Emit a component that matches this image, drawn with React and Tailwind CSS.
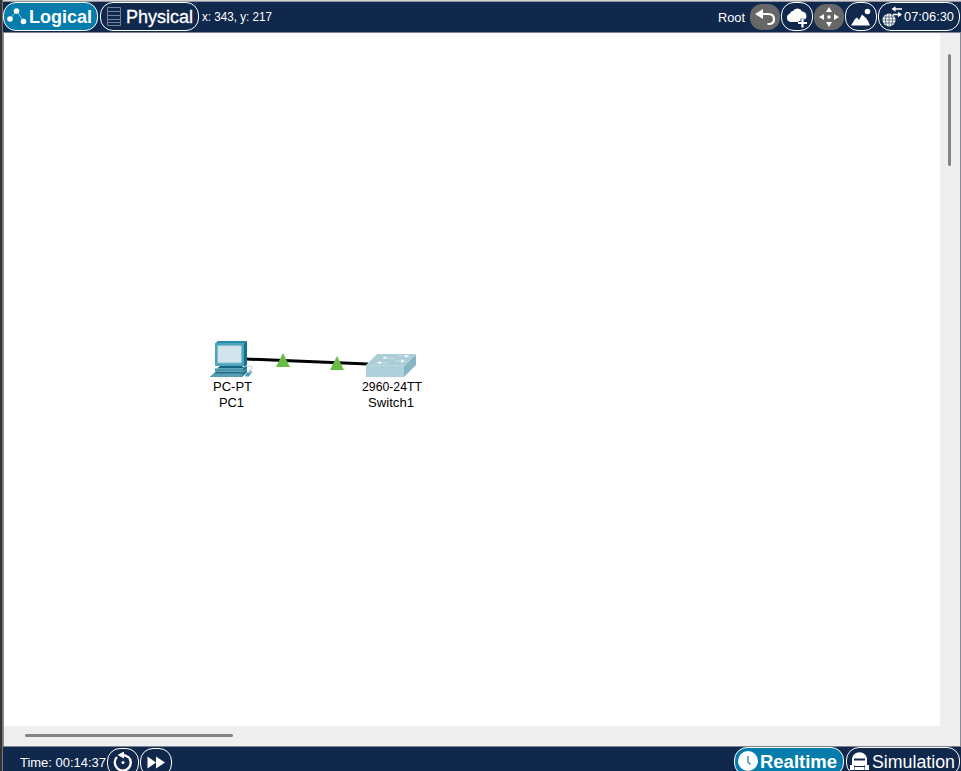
import React from 'react';

const pill = 'flex h-[29px] shrink-0 items-center rounded-[13px] border border-white';

function LogicalIcon() {
  return (
    <svg width="20" height="18" viewBox="0 0 20 18" className="shrink-0">
      <path d="M3 11L9.500 3L17 13.500" fill="none" stroke="#8fc9df" strokeWidth="1" />
      <circle cx="3" cy="11" r="2.800" fill="#fff" />
      <circle cx="9.500" cy="3" r="2.800" fill="#fff" />
      <circle cx="16.500" cy="13.500" r="2.800" fill="#fff" />
    </svg>
  );
}

function RackIcon() {
  return (
    <svg width="14" height="19" viewBox="0 0 14 19" className="shrink-0">
      <path d="M.5 .5H13.500V18.500H.5ZM.5 4.500H13.500M.5 8.500H13.500M.5 12.500H13.500M.5 15.500H13.500" fill="none" stroke="#73829c" />
    </svg>
  );
}

function TopBar() {
  return (
    <header className="mr-px flex h-[30px] shrink-0 items-start bg-[#0f284c] text-white">
      <button className={`${pill} w-[95px] bg-[#047cac] pl-[3px]`}>
        <LogicalIcon />
        <svg width="64" height="23" className="ml-[2px] block overflow-visible text-[18.500px] font-bold"><text x="0" y="18" fill="white" textLength="63" lengthAdjust="spacingAndGlyphs">Logical</text></svg>
      </button>
      <button className={`${pill} ml-[2px] w-[99px] pl-[6px]`}>
        <RackIcon />
        <svg width="68" height="23" className="ml-[5px] block overflow-visible text-[18px]"><text x="0" y="18" fill="white" stroke="white" strokeWidth=".3" textLength="67" lengthAdjust="spacingAndGlyphs">Physical</text></svg>
      </button>
      <svg width="72" height="20" className="ml-[3px] mt-[5px] overflow-visible text-[12.500px]"><text x="0" y="14" fill="white" textLength="70" lengthAdjust="spacingAndGlyphs">x: 343, y: 217</text></svg>
      <div className="flex-1" />
      <svg width="28" height="20" className="mr-[4px] mt-[5px] overflow-visible text-[13.500px]"><text x="0" y="14.500" fill="white" textLength="27" lengthAdjust="spacingAndGlyphs">Root</text></svg>
      <button className="mr-px mt-[2px] flex h-[26px] w-[30px] items-center justify-center rounded-[12px] bg-[#676767]">
        <svg width="22" height="18" viewBox="0 0 22 18">
          <path d="M1 6L9 1V11Z" fill="white" />
          <path d="M8 6H14Q20 6 20 11T15 16H13.500" fill="none" stroke="white" strokeWidth="2.200" />
        </svg>
      </button>
      <button className={`${pill} mr-px w-[32px] justify-center`}>
        <svg width="22" height="22" viewBox="0 0 22 22">
          <path d="M4.500 16A4.400 4.400 0 0 1 4 7.500A3 3 0 0 1 7 5A5 5 0 0 1 16 5.500A4.500 4.500 0 0 1 18 14L16 16Z" fill="white" />
          <path d="M16.500 12.500V22M12.500 17H21.500" stroke="#0f284c" strokeWidth="3.800" />
          <path d="M16.500 12.500V21.500M12 17H21" stroke="white" strokeWidth="2.200" />
        </svg>
      </button>
      <button className="mr-px mt-[2px] flex h-[26px] w-[30px] items-center justify-center rounded-[12px] bg-[#676767]">
        <svg width="22" height="22" viewBox="0 0 22 22" fill="white">
          <path d="M11 1L14 6H8ZM11 21L14 16H8ZM1 11L6 8V14ZM21 11L16 8V14Z" />
          <circle cx="11" cy="11" r="1.700" />
        </svg>
      </button>
      <button className={`${pill} mr-px w-[32px] justify-center`}>
        <svg width="22" height="18" viewBox="0 0 22 18" fill="white">
          <path d="M1 17.500L5 11L7 9.500L9 12L12 6.500L16 10L18 13L20 17.500Z" />
          <circle cx="17.500" cy="3.500" r="2.800" />
        </svg>
      </button>
      <button className={`${pill} w-[82px] pl-[3px]`}>
        <svg width="20" height="21" viewBox="0 0 20 21" className="shrink-0">
          <circle cx="7" cy="14" r="6.500" fill="white" />
          <path d="M1.500 11H12.500M.5 14H13.500M1.500 17H12.500M7 7.500V20.500M4.500 8Q2.300 14 4.500 20M9.500 8Q11.700 14 9.500 20" fill="none" stroke="#0f284c" strokeWidth=".6" />
          <path d="M12 3H20M11 8.500H19" stroke="white" strokeWidth="1.700" />
          <path d="M9.500 3L13.500 .3V5.700ZM20 8.500L16 5.800V11.200Z" fill="white" />
        </svg>
        <svg width="51" height="21" className="ml-[2px] overflow-visible text-[13.500px]"><text x="0" y="15" fill="white" textLength="50" lengthAdjust="spacingAndGlyphs">07:06:30</text></svg>
      </button>
    </header>
  );
}

function Computer() {
  return (
    <svg width="44" height="37" viewBox="0 0 44 37" className="block">
      <path d="M5 2.500L8 0H37L34 2.500Z" fill="#2689a7" />
      <path d="M34 2.500L37 0V23.500L34 26Z" fill="#14718e" />
      <rect x="5" y="2" width="29" height="23" fill="#4fa4bb" />
      <rect x="7.500" y="4.500" width="24" height="17.500" rx="1" fill="#d1e4eb" stroke="#81bdcc" />
      <path d="M10 25H32L35 27.500H7Z" fill="#116780" />
      <path d="M5 27.500H33V30.500H5Z" fill="#4299b0" />
      <path d="M33 27.500L37 24V28L33 30.500Z" fill="#1b7591" />
      <path d="M6 30.500H34L37 28V31L32 36H0Z" fill="#26718a" />
      <path d="M4 32.500H33L31 36H0Z" fill="#569fb3" />
      <path d="M36 25.500Q43 24 42 27.500L39 30" fill="none" stroke="#b7d6df" />
      <path d="M36 32L41 29.500L42 31L39 35.500H35Z" fill="#4c9db4" />
      <path d="M36 32L41 29.500L40 32Z" fill="#a7d2dc" />
    </svg>
  );
}

function Switch() {
  return (
    <svg width="50" height="24" viewBox="0 0 50 24" className="block">
      <path d="M0 11L11 0H50L38 11Z" fill="#abcdd6" />
      <path d="M0 11H38V23H0Z" fill="#add0da" />
      <path d="M38 11L50 0V11L38 23Z" fill="#86b5c2" />
      <path d="M0 11.500H38L50 .5" fill="none" stroke="#bbd8df" />
      <path d="M17 4H28M31 2H42M12 9H23M28 7H38" stroke="#c7dfe6" strokeWidth="1" />
      <path d="M16 4L20 2V5ZM44 2L39 .5V4ZM10 9L15 7V10ZM39 7L35 5V9Z" fill="#edf6f8" />
    </svg>
  );
}

function Label({ text, width }) {
  return (
    <svg width={width} height="16" className="block shrink-0 overflow-visible text-[13.500px]">
      <text x="0" y="13" fill="black" textLength={width} lengthAdjust="spacingAndGlyphs">{text}</text>
    </svg>
  );
}

function Workspace() {
  return (
    <main className="relative h-[693px] w-[936px] shrink-0 bg-white">
      <svg className="absolute left-[240px] top-[318px]" width="130" height="24" viewBox="0 0 130 24">
        <path d="M2 8L124 13" stroke="black" strokeWidth="3" />
        <path d="M39 2L46 16H32ZM93 5L100 19H86Z" fill="#69bd45" />
      </svg>
      <div className="absolute left-[206px] top-[308px] flex w-[44px] flex-col items-center">
        <Computer />
        <Label text="PC-PT" width={39} />
        <div className="-ml-px"><Label text="PC1" width={25} /></div>
      </div>
      <div className="absolute left-[357px] top-[321px] flex w-[62px] flex-col items-center">
        <div className="-ml-[2px]"><Switch /></div>
        <Label text="2960-24TT" width={60} />
        <div className="-ml-[2px]"><Label text="Switch1" width={46} /></div>
      </div>
    </main>
  );
}

function BottomBar() {
  return (
    <footer className="mr-px flex h-[24px] shrink-0 items-start overflow-hidden bg-[#0f284c] text-white">
      <svg width="87" height="24" className="ml-[17px] shrink-0 overflow-visible text-[13.500px]"><text x="0" y="19.500" fill="white" textLength="86" lengthAdjust="spacingAndGlyphs">Time: 00:14:37</text></svg>
      <button className={`${pill} mt-px w-[32px] justify-center`}>
        <svg width="22" height="22" viewBox="0 0 22 22">
          <path d="M16 4.500A8 8 0 1 1 5 5" fill="none" stroke="white" strokeWidth="2.300" />
          <path d="M5.500 3L12 -.5V6.500Z" fill="white" />
          <path d="M10 3Q14 3 16.500 5.500" fill="none" stroke="white" strokeWidth="2.300" />
          <circle cx="11" cy="10.500" r="1.500" fill="white" />
        </svg>
      </button>
      <button className={`${pill} ml-px mt-px w-[32px] justify-center`}>
        <svg width="19" height="14" viewBox="0 0 19 14"><path d="M.5 .5L9 6.500L.5 12.500ZM9 .5L18 6.500L9 12.500Z" fill="white" /></svg>
      </button>
      <div className="flex-1" />
      <button className={`${pill} w-[110px] bg-[#047cac] pl-[3px]`}>
        <svg width="20" height="20" viewBox="0 0 20 20" className="-mt-[2px] shrink-0"><circle cx="10" cy="10" r="10" fill="white" /><path d="M10 5V11L12.500 13.500" fill="none" stroke="#327c9e" strokeWidth="1.300" /></svg>
        <svg width="79" height="22" className="ml-[2px] shrink-0 text-[18px] font-bold"><text x="0" y="16.500" fill="white" textLength="77" lengthAdjust="spacingAndGlyphs">Realtime</text></svg>
      </button>
      <button className={`${pill} ml-[2px] w-[114px] pl-[2px]`}>
        <svg width="21" height="21" viewBox="0 0 21 21" className="shrink-0">
          <path d="M3 15V8Q3.500 4 7 2Q10.500 .5 14 2Q17.500 4 18 8V15Z" fill="white" />
          <path d="M1 14H5V16H16V14H20V19H1Z" fill="white" />
          <path d="M5 8.500H16" stroke="#0f284c" strokeWidth="2" />
          <path d="M5.500 14V19M15.500 14V19" stroke="#0f284c" strokeWidth=".5" />
        </svg>
        <svg width="84" height="22" className="ml-[2px] shrink-0 overflow-visible text-[18px]"><text x="0" y="16.500" fill="white" textLength="83" lengthAdjust="spacingAndGlyphs">Simulation</text></svg>
      </button>
    </footer>
  );
}

export default function App() {
  return (
    <div className="flex h-[771px] w-[961px] overflow-hidden bg-[#0f284c] font-['Liberation_Sans',Arial,sans-serif]">
      <div className="w-[3px] shrink-0 border-r border-[#77777b] bg-[#333235]" />
      <div className="flex min-w-0 flex-1 flex-col">
        <div className="h-[2px] shrink-0 border-t border-[#d4d4d4] bg-[#8f96a3]" />
        <TopBar />
        <div className="h-px shrink-0 bg-[#7d8391]" />
        <div className="flex h-[713px] shrink-0 border-l border-r border-[#858b98] bg-[#efefef]">
          <div className="flex flex-col">
            <Workspace />
            <div className="ml-[21px] mt-[8px] h-[3px] w-[208px] rounded-full bg-[#858585]" />
          </div>
          <div className="ml-[8px] mt-[21px] h-[112px] w-[3px] rounded-full bg-[#858585]" />
        </div>
        <div className="h-px shrink-0 bg-[#7d8391]" />
        <BottomBar />
      </div>
    </div>
  );
}
